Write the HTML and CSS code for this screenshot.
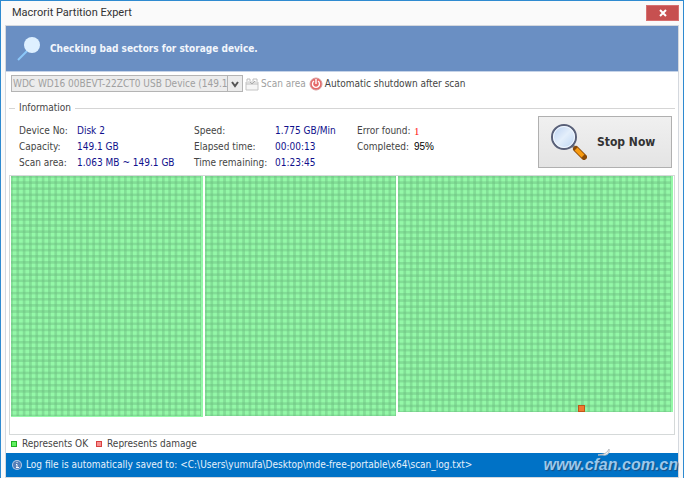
FILE: index.html
```html
<!DOCTYPE html>
<html lang="en">
<head>
    <meta charset="UTF-8" />
    <title>Macrorit Partition Expert</title>
    <link rel="stylesheet" href="styles.css">
</head>
<body>
<div class="window">
    <div class="titlebar">
        <h1>Macrorit Partition Expert</h1>
        <button class="close" type="button" aria-label="Close">
            <svg width="8" height="8" viewBox="0 0 8 8"><path d="M1 1l6 6M7 1L1 7" stroke="#fff" stroke-width="2" /></svg>
        </button>
    </div>

    <div class="client">
        <div class="banner">
            <svg width="24" height="24" viewBox="0 0 24 24">
                <path d="M1 23L10 14" stroke="#8cc8fa" stroke-width="2" />
                <circle cx="15" cy="8" r="8" fill="#def0ff" />
            </svg>
            <h2>Checking bad sectors for storage device.</h2>
        </div>

        <div class="toolbar">
            <div class="combo">
                <select aria-label="Device" disabled>
                    <option>WDC WD16 00BEVT-22ZCT0 USB Device (149.1</option>
                </select>
                <svg width="14" height="14" viewBox="0 0 14 14"><path d="M4 5l3 4l3-4" fill="none" stroke="#555" stroke-width="2" /></svg>
            </div>
            <button class="tool" type="button" disabled>
                <svg width="14" height="14" viewBox="0 0 14 14">
                    <path d="M1 5h12v8H1z" fill="#f6f6f6" stroke="#c4c4c4" />
                    <path d="M2 4V2h3v2M8 4V2h4v2M1 7h12" fill="none" stroke="#bcbcbc" />
                    <path d="M5 5l2 2l3-3" fill="none" stroke="#aaa" />
                </svg>
                Scan area
            </button>
            <button class="tool" type="button">
                <svg width="14" height="14" viewBox="0 0 14 14">
                    <circle cx="7" cy="7" r="6" fill="#e56a6a" stroke="#d89a9a" />
                    <path d="M5 4a3.5 3.5 0 1 0 4 0M7 2v5" fill="none" stroke="#fff" stroke-width="1.4" />
                </svg>
                Automatic shutdown after scan
            </button>
        </div>

        <fieldset class="info">
            <legend>Information</legend>
            <div class="info-row">
                <dl class="device">
                    <dt>Device No:</dt><dd>Disk 2</dd>
                    <dt>Capacity:</dt><dd>149.1 GB</dd>
                    <dt>Scan area:</dt><dd>1.063 MB ~ 149.1 GB</dd>
                </dl>
                <dl class="timing">
                    <dt>Speed:</dt><dd>1.775 GB/Min</dd>
                    <dt>Elapsed time:</dt><dd>00:00:13</dd>
                    <dt>Time remaining:</dt><dd>01:23:45</dd>
                </dl>
                <dl class="result">
                    <dt>Error found:</dt><dd class="errors">1</dd>
                    <dt>Completed:</dt><dd class="percent">95%</dd>
                </dl>
                <button class="stop" type="button">
                    <svg width="36" height="36" viewBox="0 0 36 36">
                        <defs>
                            <linearGradient id="glass" x1="0" y1="0" x2="1" y2="1">
                                <stop offset="0" stop-color="#b5cdf0" />
                                <stop offset="0.5" stop-color="#e4effb" />
                                <stop offset="1" stop-color="#b9d3f2" />
                            </linearGradient>
                        </defs>
                        <path d="M21 21l5 5" stroke="#858585" stroke-width="3" />
                        <path d="M25 25l8 8" stroke="#8a4a08" stroke-width="6" stroke-linecap="round" />
                        <path d="M25 25l7 7" stroke="#f79a10" stroke-width="4" />
                        <circle cx="13" cy="13" r="12" fill="url(#glass)" stroke="#596078" stroke-width="2" />
                        <circle cx="13" cy="13" r="10.5" fill="none" stroke="#f3f8ff" />
                    </svg>
                    Stop Now
                </button>
            </div>
        </fieldset>

        <div class="map">
            <div class="block first"></div>
            <div class="block second"></div>
            <div class="block third"><span class="bad"></span></div>
        </div>

        <div class="legend">
            <span class="key ok"></span>Represents OK
            <span class="key damage"></span>Represents damage
        </div>

        <div class="statusbar">
            <svg width="10" height="10" viewBox="0 0 10 10">
                <circle cx="5" cy="5" r="5" fill="#b4cbe8" />
                <circle cx="5" cy="5" r="4" fill="#567fb8" />
                <path d="M5 2v1M4 4.5h1v3M4 7.5h3" fill="none" stroke="#fff" />
            </svg>
            <span>Log file is automatically saved to: &lt;C:\Users\yumufa\Desktop\mde-free-portable\x64\scan_log.txt&gt;</span>
            <span class="site">
                www.cfan.com.cn
                <svg class="leaf" width="14" height="8" viewBox="0 0 14 8">
                    <path d="M1 7C5 6 9 7 12 1C13 5 10 8 6 7z" fill="#f4f4f4" stroke="#b8bcc0" />
                </svg>
            </span>
        </div>
    </div>
</div>
</body>
</html>
```

FILE: styles.css
```css
* {
    box-sizing: border-box;
}

body {
    margin: 0;
    font-family: "DejaVu Sans Condensed", "DejaVu Sans", sans-serif;
    font-size: 10px;
    line-height: 16px;
    color: #444;
}

button, select {
    font: inherit;
    color: inherit;
    margin: 0;
}

svg {
    flex: none;
}

.window {
    min-height: 100vh;
    margin-right: 1px;
    padding: 0 4px;
    background-color: #fafafa;
    border: 1px solid #2e8ad0;
    border-bottom: 0;
}

.titlebar {
    display: flex;
    justify-content: space-between;
    align-items: flex-start;
    height: 24px;
    padding: 4px 0 0 7px;
}

.titlebar h1 {
    margin: 0;
    font-family: Roboto, sans-serif;
    font-size: 11px;
    font-weight: normal;
    line-height: 16px;
    color: #333;
}

.close {
    display: flex;
    justify-content: center;
    align-items: center;
    width: 33px;
    height: 16px;
    padding: 0;
    background-color: #c75050;
    border: 1px solid #d77070;
}

.client {
    background-color: #fff;
    border: 1px solid #d4d8de;
}

.banner {
    display: flex;
    align-items: center;
    gap: 9px;
    height: 46px;
    padding: 0 11px;
    background-color: #6a8fc3;
    border-bottom: 1px solid #c5d3e8;
}

.banner h2 {
    margin: 0;
    font-size: 10px;
    color: #f2f6fc;
}

.toolbar {
    display: flex;
    align-items: center;
    padding: 3px 5px 0;
}

.combo {
    display: flex;
    align-items: center;
    width: 232px;
    height: 17px;
    margin-right: 2px;
    background-color: #ececec;
    border: 1px solid #b4b4b4;
}

.combo select {
    flex: 1;
    min-width: 0;
    height: 15px;
    padding: 0 0 0 1px;
    appearance: none;
    background: none;
    border: 0;
    border-right: 1px solid #b4b4b4;
    border-radius: 0;
    line-height: 15px;
    color: #a0a0a0;
    opacity: 1;
}

.tool {
    display: flex;
    align-items: center;
    gap: 2px;
    margin-right: 3px;
    padding: 0;
    background: none;
    border: 0;
}

.tool:disabled {
    color: #a0a0a0;
}

.info {
    margin: 8px 3px 0;
    padding: 0 3px 0 10px;
    border: 0 solid #d5d5d5;
    border-top-width: 1px;
}

.info legend {
    padding: 0 4px;
    margin-left: -4px;
}

.info-row {
    display: flex;
    align-items: flex-start;
    height: 59px;
}

dl {
    display: grid;
    align-content: start;
    margin: 7px 0 0;
}

dd {
    margin: 0;
    color: #10108c;
    white-space: nowrap;
}

.device {
    grid-template-columns: 58px 117px;
}

.timing {
    grid-template-columns: 81px 82px;
}

.result {
    grid-template-columns: 57px 40px;
}

.result dt {
    white-space: nowrap;
}

.result .errors {
    font-family: "Liberation Serif", serif;
    font-size: 11px;
    color: #ff1010;
}

.result .percent {
    font-family: "Liberation Sans", sans-serif;
    color: #000;
}

.stop {
    display: flex;
    align-items: center;
    gap: 10px;
    width: 134px;
    height: 52px;
    margin-left: auto;
    padding: 0 12px;
    background-image: linear-gradient(#f0f0f0, #e4e4e4);
    border: 1px solid #b0b0b0;
    font-size: 12px;
    font-weight: bold;
    color: #333;
    white-space: nowrap;
}

.map {
    display: flex;
    align-items: flex-start;
    gap: 2px;
    height: 260px;
    margin: 0 3px;
    padding: 0 1px;
    border: 1px solid #d5d9d9;
}

/* every tile is one sector cell */
.block {
    position: relative;
    flex: 192;
    background-color: #94f8a8;
    background-image:
        linear-gradient(90deg, rgba(108, 190, 128, 0.45) 2px, transparent 2px, transparent 5px, rgba(108, 190, 128, 0.45) 5px),
        linear-gradient(rgba(108, 190, 128, 0.45) 2px, transparent 2px, transparent 5px, rgba(108, 190, 128, 0.45) 5px);
    background-size: calc(100% / 30) calc(100% / 39);
    border: 0 solid #94f8a8;
}

.first {
    height: 241px;
    border-right-width: 2px;
    border-bottom-width: 1px;
}

.second {
    height: 240px;
}

.third {
    flex: 276;
    height: 236px;
    background-size: calc(100% / 43) calc(100% / 38);
    border-right-width: 2px;
}

.bad {
    position: absolute;
    left: 66%;
    bottom: 0;
    width: 7px;
    height: 7px;
    background-color: #f07830;
    border: 1px solid #c05818;
}

.legend {
    display: flex;
    align-items: center;
    height: 18px;
    padding: 0 5px;
}

.key {
    width: 6px;
    height: 6px;
    margin-right: 5px;
}

.ok {
    background-color: #60f060;
    border: 1px solid #20b020;
}

.damage {
    margin-left: 8px;
    background-color: #f89090;
    border: 1px solid #d84040;
}

.statusbar {
    display: flex;
    align-items: center;
    gap: 4px;
    height: 24px;
    padding: 0 0 0 6px;
    background-color: #0072c6;
    color: #e6f1fb;
    white-space: nowrap;
}

.site {
    position: relative;
    margin-left: auto;
    font-family: "Liberation Sans", sans-serif;
    font-size: 16px;
    font-style: italic;
    font-weight: bold;
    color: #9cc8ec;
    text-shadow: 1px 1px 1px #1c4f80;
}

.leaf {
    position: absolute;
    left: 54px;
    top: -9px;
}
```
